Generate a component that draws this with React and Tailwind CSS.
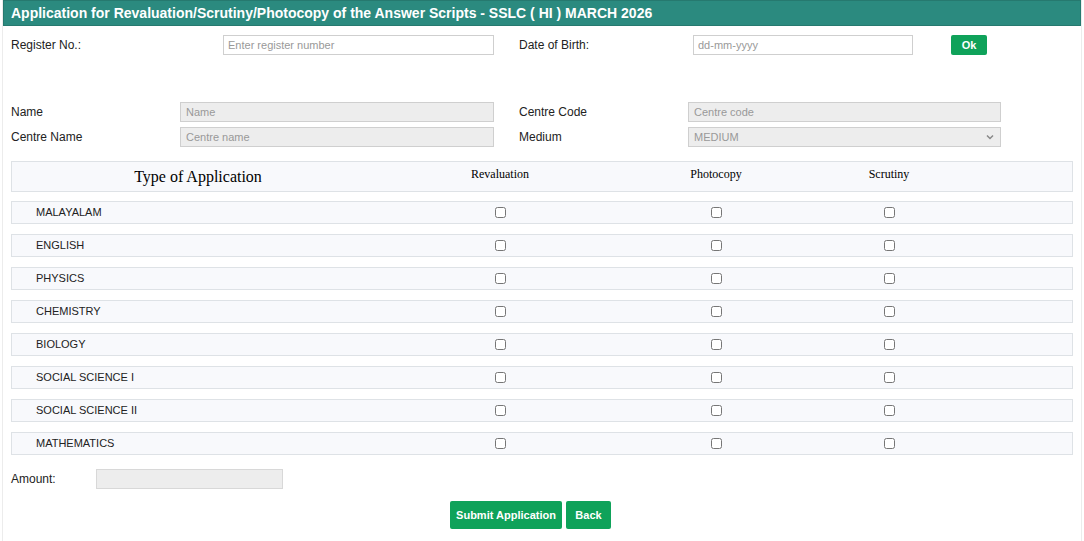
import React from "react";

const SUBJECTS = [
  "MALAYALAM",
  "ENGLISH",
  "PHYSICS",
  "CHEMISTRY",
  "BIOLOGY",
  "SOCIAL SCIENCE I",
  "SOCIAL SCIENCE II",
  "MATHEMATICS",
];

const GRID = "grid grid-cols-[372px_232px_200px_146px_1fr] items-center";

function Check() {
  return (
    <div className="flex justify-center">
      <input type="checkbox" className="w-[11px] h-[11px] m-0 accent-gray-500" />
    </div>
  );
}

export default function App() {
  return (
    <div className="w-[1084px] h-[541px] bg-white font-['Liberation_Sans',Arial,sans-serif] text-[#222]">
      <div className="mx-[2px] h-full border-x border-[#ececec]">
        <div className="h-[26px] bg-[#2b8a7f] border border-[#26796f] flex items-center pl-[7px] text-white text-[14px] font-bold">
          Application for Revaluation/Scrutiny/Photocopy of the Answer Scripts - SSLC ( HI ) MARCH 2026
        </div>

        <div className="pl-[8px] pt-[9px]">
          <div className="flex items-center h-[20px] text-[12px]">
            <div className="w-[212px]">Register No.:</div>
            <input
              className="w-[271px] h-[20px] border border-[#cfcfcf] px-[4px] text-[11px] placeholder:text-[#999] outline-none"
              placeholder="Enter register number"
            />
            <div className="w-[174px] ml-[25px]">Date of Birth:</div>
            <input
              className="w-[220px] h-[20px] border border-[#cfcfcf] px-[4px] text-[11px] placeholder:text-[#999] outline-none"
              placeholder="dd-mm-yyyy"
            />
            <button className="ml-[38px] w-[36px] h-[20px] rounded-[2px] bg-[#0fa25a] text-white text-[11px] font-bold">
              Ok
            </button>
          </div>

          <div className="flex items-center h-[20px] text-[12px] mt-[47px]">
            <div className="w-[169px]">Name</div>
            <input
              disabled
              className="w-[314px] h-[20px] border border-[#cfcfcf] bg-[#ededed] px-[5px] text-[11px] placeholder:text-[#999]"
              placeholder="Name"
            />
            <div className="w-[169px] ml-[25px]">Centre Code</div>
            <input
              disabled
              className="w-[313px] h-[20px] border border-[#cfcfcf] bg-[#ededed] px-[5px] text-[11px] placeholder:text-[#999]"
              placeholder="Centre code"
            />
          </div>

          <div className="flex items-center h-[20px] text-[12px] mt-[5px]">
            <div className="w-[169px]">Centre Name</div>
            <input
              disabled
              className="w-[314px] h-[20px] border border-[#cfcfcf] bg-[#ededed] px-[5px] text-[11px] placeholder:text-[#999]"
              placeholder="Centre name"
            />
            <div className="w-[169px] ml-[25px]">Medium</div>
            <div className="w-[313px] h-[20px] border border-[#cfcfcf] bg-[#ededed] px-[5px] text-[11px] text-[#999] flex items-center justify-between">
              <span>MEDIUM</span>
              <svg width="10" height="10" viewBox="0 0 10 10" fill="none" stroke="#888" strokeWidth="1.5">
                <path d="M2 3.5l3 3 3-3" />
              </svg>
            </div>
          </div>

          <div className="w-[1062px] mt-[14px] font-['Liberation_Serif','Times_New_Roman',serif] text-black">
            <div className={`${GRID} h-[31px] bg-[#f8f9fc] border border-[#dee2e6]`}>
              <div className="text-center text-[16px]">Type of Application</div>
              <div className="text-center text-[12px] -mt-[6px]">Revaluation</div>
              <div className="text-center text-[12px] -mt-[6px]">Photocopy</div>
              <div className="text-center text-[12px] -mt-[6px]">Scrutiny</div>
              <div />
            </div>

            <div className="mt-[9px] flex flex-col gap-[10px] font-['Liberation_Sans',Arial,sans-serif]">
              {SUBJECTS.map((s) => (
                <div key={s} className={`${GRID} h-[23px] bg-[#f8f9fc] border border-[#dee2e6]`}>
                  <div className="pl-[24px] text-[11px] text-[#222]">{s}</div>
                  <Check />
                  <Check />
                  <Check />
                  <div />
                </div>
              ))}
            </div>
          </div>

          <div className="flex items-center h-[20px] text-[12px] mt-[14px]">
            <div className="w-[85px]">Amount:</div>
            <input disabled className="w-[187px] h-[20px] border border-[#d8d8d8] bg-[#ededed]" />
          </div>

          <div className="w-[1062px] flex justify-center gap-[4px] mt-[12px] pr-[23px]">
            <button className="h-[28px] w-[112px] rounded-[2px] bg-[#0fa25a] text-white text-[11px] font-bold">
              Submit Application
            </button>
            <button className="h-[28px] w-[45px] rounded-[2px] bg-[#0fa25a] text-white text-[11px] font-bold">
              Back
            </button>
          </div>
        </div>
      </div>
    </div>
  );
}
